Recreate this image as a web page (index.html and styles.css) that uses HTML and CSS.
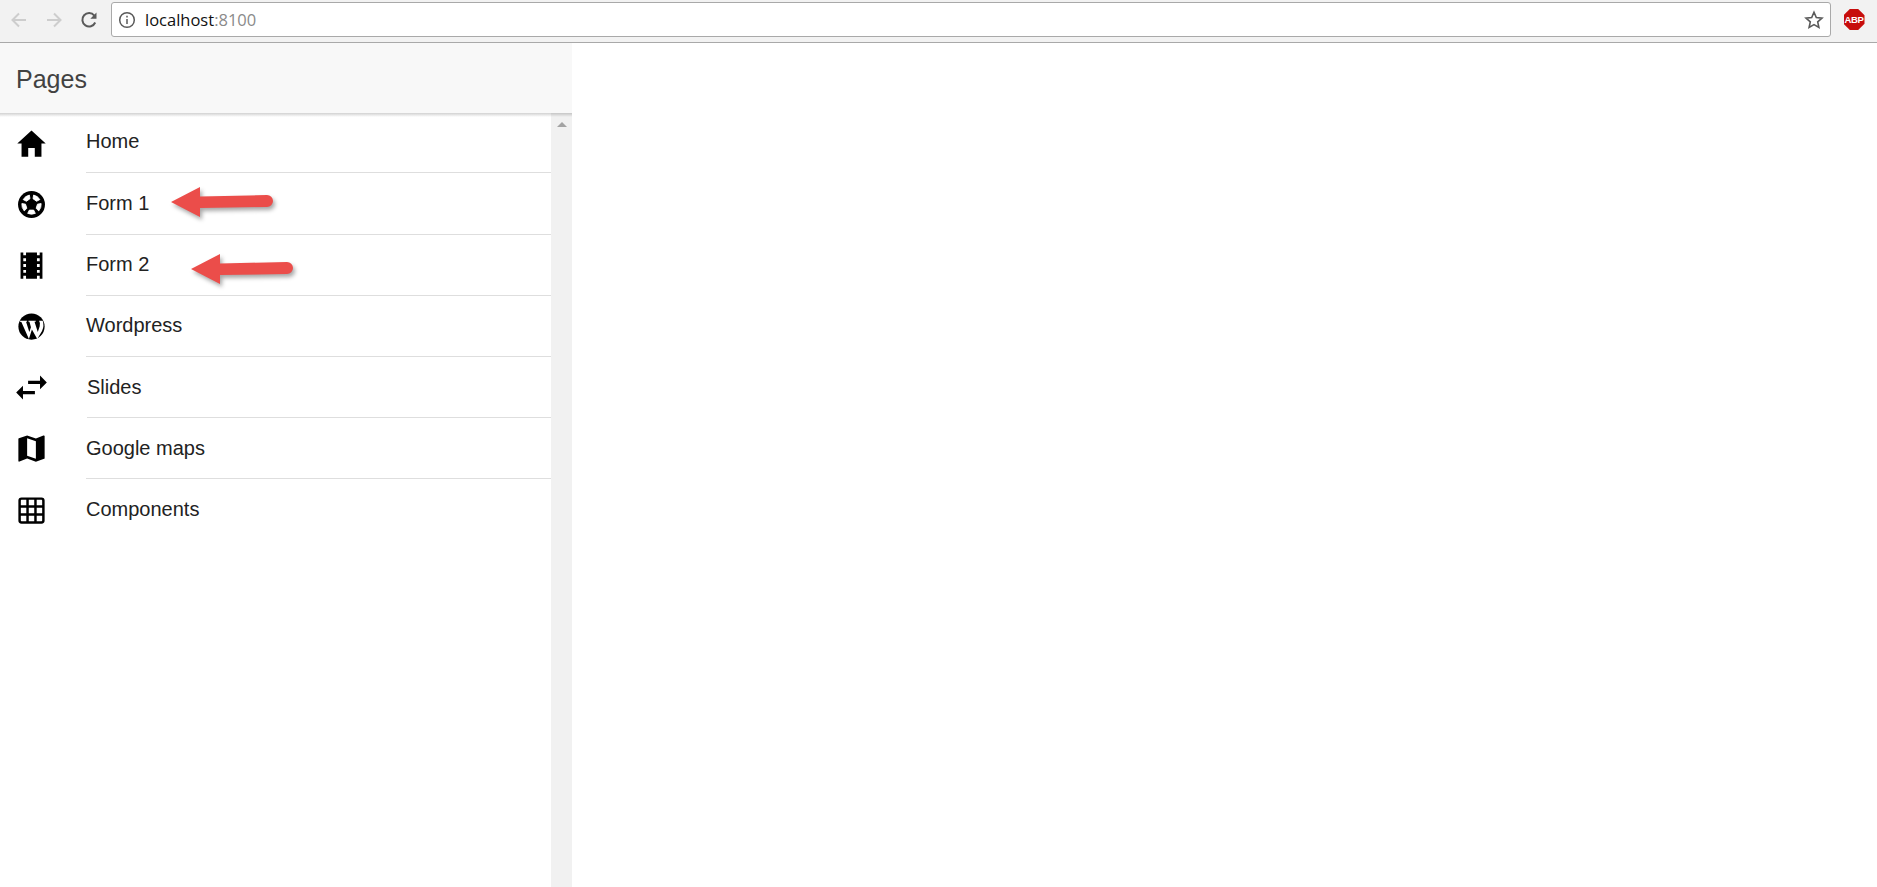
FILE: index.html
```html
<!DOCTYPE html>
<html lang="en">
<head>
  <meta charset="UTF-8">
  <meta name="viewport" content="width=device-width, initial-scale=1.0">
  <title>localhost:8100</title>
  <link rel="stylesheet" href="styles.css">
</head>
<body>
  <!-- browser chrome -->
  <div class="toolbar">
    <div class="nav-btn">
      <svg viewBox="0 0 20 20" class="nav-icon off"><path d="M17 10H4M10 3.500L3.500 10l6.500 6.500"/></svg>
    </div>
    <div class="nav-btn">
      <svg viewBox="0 0 20 20" class="nav-icon off"><path d="M3 10h13M10 3.500l6.500 6.500-6.500 6.500"/></svg>
    </div>
    <div class="nav-btn">
      <svg viewBox="0 0 20 20" class="nav-icon"><path d="M16.200 12.500A6.700 6.700 0 1 1 15.300 5.600"/><path class="fill" d="M17.500 2.500v6.200h-6.200z"/></svg>
    </div>
    <div class="omnibox">
      <svg viewBox="0 0 18 18" class="info-icon">
        <circle cx="9" cy="9" r="7.300"/>
        <path d="M9 8v5M9 4.800v1.800"/>
      </svg>
      <span class="url">localhost<span class="url-port">:8100</span></span>
      <svg viewBox="0 0 20 20" class="star-icon"><path d="M10 2.300l2.300 5.200 5.700.6-4.300 3.800 1.200 5.600-4.900-2.900-4.900 2.900 1.200-5.600L2 8.100l5.700-.6z"/></svg>
    </div>
    <div class="ext">
      <div class="abp">ABP</div>
    </div>
  </div>

  <div class="app">
    <div class="sidebar">
      <div class="title-bar">Pages</div>
      <div class="content">
        <div class="list">
          <div class="item">
            <svg viewBox="0 0 512 512" class="icon"><path d="M208 448V320h96v128h97.600V256H464L256 64 48 256h62.400v192z"/></svg>
            <div class="label"><span>Home</span></div>
          </div>
          <div class="item">
            <svg viewBox="0 0 512 512" class="icon">
              <circle cx="256" cy="256" r="197"/>
              <g class="patches">
                <path d="M224 338H288L312 386Q256 410 200 386Z"/>
                <path transform="rotate(72 256 256)" d="M224 338H288L312 386Q256 410 200 386Z"/>
                <path transform="rotate(144 256 256)" d="M224 338H288L312 386Q256 410 200 386Z"/>
                <path transform="rotate(216 256 256)" d="M224 338H288L312 386Q256 410 200 386Z"/>
                <path transform="rotate(288 256 256)" d="M224 338H288L312 386Q256 410 200 386Z"/>
              </g>
            </svg>
            <div class="label"><span>Form 1</span></div>
          </div>
          <div class="item">
            <svg viewBox="0 0 512 512" class="icon"><path d="M376 64v42.667h-40V64H176v42.667h-40V64H96v384h40v-42.666h40V448h160v-42.666h40V448h40V64h-40zM176 362.667h-40V320h40v42.667zm0-85.333h-40v-42.667h40v42.667zM176 192h-40v-42.666h40V192zm200 170.667h-40V320h40v42.667zm0-85.333h-40v-42.667h40v42.667zM376 192h-40v-42.666h40V192z"/></svg>
            <div class="label"><span>Form 2</span></div>
          </div>
          <div class="item">
            <svg viewBox="0 0 512 512" class="icon">
              <circle cx="256" cy="256" r="192"/>
              <path class="wp" d="M88 172H190V186L176 188L224 338L248 268L226 188L212 186V172H318V186L300 188L348 338L376 252Q392 210 366 172H420Q446 250 410 320L340 440L262 300L218 440L108 190L88 186Z"/>
            </svg>
            <div class="label"><span>Wordpress</span></div>
          </div>
          <div class="item item-slides">
            <svg viewBox="0 0 512 512" class="icon"><path d="M131.300 231.100L32 330.600l99.300 99.400v-74.600h174.500v-49.700H131.300v-74.600zM480 181.400L380.700 82v74.600H206.200v49.700h174.500v74.600l99.300-99.500z"/></svg>
            <div class="label"><span>Slides</span></div>
          </div>
          <div class="item">
            <svg viewBox="0 0 512 512" class="icon"><path d="M437.333 64c-2.176 0-4.396 1-6.667 1.844L320 108.802 192 64 71.647 105.354c-4.485 1.221-7.647 4.997-7.647 9.956v322.024c0 6.111 4.883 10.667 10.667 10.667 1.610 0 3.340-.333 5.333-1.056L192 403.198 320 448l120.353-40.354c4.485-1.221 7.647-4.997 7.647-9.956V74.666C448 68.555 443.117 64 437.333 64zM320 405.333l-128-44.666V106.667l128 44.666v254z"/></svg>
            <div class="label"><span>Google maps</span></div>
          </div>
          <div class="item last">
            <svg viewBox="0 0 512 512" class="icon">
              <rect class="grid" x="82" y="82" width="348" height="348" rx="28"/>
              <path class="grid" d="M198 82V430M314 82V430M82 198H430M82 314H430"/>
            </svg>
            <div class="label"><span>Components</span></div>
          </div>
        </div>
        <div class="scrollbar"><div class="scroll-up"></div></div>
      </div>

      <!-- red arrows drawn on top of the screenshot -->
      <svg class="arrow arrow-1" viewBox="0 0 120 40"><path d="M1 17L30 2V11.500L97 10A6 6 0 0 1 97 22L30 23V32Z"/></svg>
      <svg class="arrow arrow-2" viewBox="0 0 120 40"><path d="M1 17L30 2V11.500L97 10A6 6 0 0 1 97 22L30 23V32Z"/></svg>
    </div>
    <div class="main"></div>
  </div>
</body>
</html>
```

FILE: styles.css
```css
html, body {
  height: 100%;
}
body {
  margin: 0;
  display: flex;
  flex-direction: column;
  overflow: hidden;
  font-family: "Liberation Sans", Arial, sans-serif;
  background-color: #fff;
}

/* browser toolbar */
.toolbar {
  display: flex;
  align-items: flex-start;
  height: 40px;
  padding: 2px 0 0 1px;
  background-color: #f2f2f2;
  border-bottom: 1px solid #a9a9a9;
}
.nav-btn {
  width: 35px;
  height: 35px;
  display: flex;
  align-items: center;
  justify-content: center;
}
.nav-icon {
  width: 20px;
  height: 20px;
  fill: none;
  stroke: #5a5a5a;
  stroke-width: 2;
}
.nav-icon.off {
  stroke: #cdcdcd;
}
.nav-icon .fill {
  fill: #5a5a5a;
  stroke: none;
}
.omnibox {
  flex: 1;
  height: 33px;
  margin-left: 5px;
  display: flex;
  align-items: center;
  padding: 0 6px;
  background-color: #fff;
  border: 1px solid #a9a9a9;
  border-radius: 3px;
}
.info-icon {
  width: 18px;
  height: 18px;
  margin-right: 9px;
  fill: none;
  stroke: #5a5a5a;
  stroke-width: 1.500;
}
.url {
  flex: 1;
  font-family: "Open Sans", sans-serif;
  font-size: 16.500px;
  color: #111;
}
.url-port {
  color: #8a8a8a;
}
.star-icon {
  width: 20px;
  height: 20px;
  fill: none;
  stroke: #5a5a5a;
  stroke-width: 1.600;
}
.ext {
  width: 46px;
  height: 35px;
  display: flex;
  align-items: center;
  justify-content: center;
}
.abp {
  width: 21px;
  height: 21px;
  line-height: 21px;
  text-align: center;
  font-size: 9.500px;
  font-weight: bold;
  letter-spacing: -0.3px;
  color: #fff;
  background-color: #c70d0c;
  clip-path: polygon(30% 0, 70% 0, 100% 30%, 100% 70%, 70% 100%, 30% 100%, 0 70%, 0 30%);
}

/* app */
.app {
  flex: 1;
  display: flex;
  min-height: 0;
}
.sidebar {
  position: relative;
  width: 572px;
  display: flex;
  flex-direction: column;
}
.title-bar {
  position: relative;
  height: 70px;
  line-height: 72px;
  padding-left: 16px;
  font-size: 25px;
  color: #424242;
  background-color: #f8f8f8;
}
/* shadow stops at the panel edge, so no box-shadow here */
.title-bar::after {
  content: "";
  position: absolute;
  left: 0;
  right: 0;
  top: 70px;
  height: 4px;
  background: linear-gradient(rgba(0, 0, 0, 0.18), rgba(0, 0, 0, 0));
}
.content {
  flex: 1;
  display: flex;
  min-height: 0;
}
.list {
  flex: 1;
}
.item {
  display: flex;
  height: 61.200px;
}
.item:first-child {
  height: 60.400px;
}
.icon {
  flex: none;
  width: 35px;
  height: 35px;
  margin: 13.200px 0 0 13.500px;
  fill: #000;
}
.item:first-child .icon {
  margin-top: 13px;
}
.patches path {
  fill: #fff;
  stroke: #fff;
  stroke-width: 12;
  stroke-linejoin: round;
}
.icon .wp {
  fill: #fff;
}
.icon .grid {
  fill: none;
  stroke: #000;
  stroke-width: 36;
}
.label {
  flex: 1;
  margin-left: 37.500px;
  display: flex;
  align-items: center;
  box-sizing: border-box;
  font-size: 20px;
  color: #222;
  border-bottom: 1px solid #dedede;
}
.item:first-child .label {
  padding-bottom: 3px;
}
.item-slides .label {
  margin-left: 38.500px;
}
.item.last .label {
  border-bottom: none;
}
.scrollbar {
  width: 21px;
  background-color: #f1f1f1;
}
.scroll-up {
  width: 0;
  height: 0;
  margin: 9px auto 0;
  border-left: 5px solid transparent;
  border-right: 5px solid transparent;
  border-bottom: 5px solid #a3a3a3;
}
.main {
  flex: 1;
  background-color: #fff;
}

.arrow {
  position: absolute;
  width: 120px;
  height: 40px;
  fill: #eb4d4a;
  filter: drop-shadow(2px 3px 2px rgba(0, 0, 0, 0.35));
}
.arrow-1 {
  left: 170px;
  top: 142px;
}
.arrow-2 {
  left: 190px;
  top: 209px;
}
```
